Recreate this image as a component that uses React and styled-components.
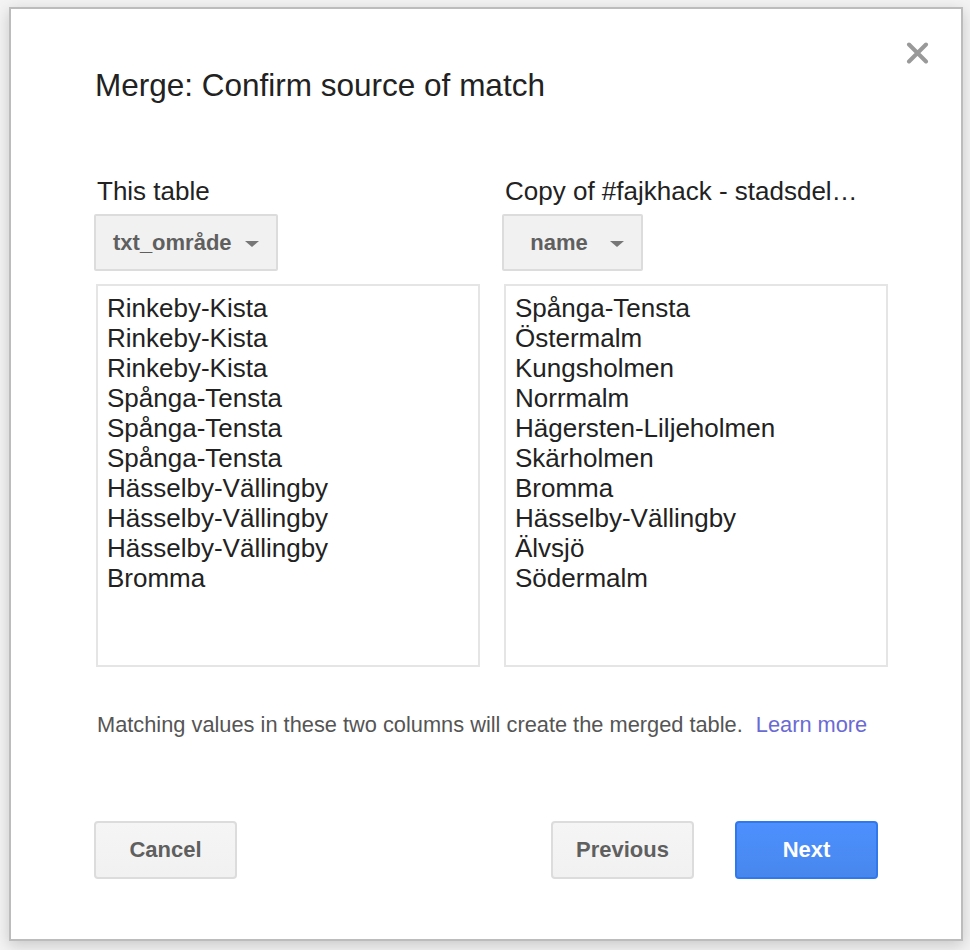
import React from 'react'
import styled, { createGlobalStyle } from 'styled-components'

const GlobalStyle = createGlobalStyle`
  html, body {
    margin: 0;
    padding: 0;
    background: #f3f3f3;
  }
  body {
    font-family: "Liberation Sans", Arial, sans-serif;
    color: #222;
  }
`

const Page = styled.div`
  width: 970px;
  height: 950px;
  padding: 7px 0 0 9px;
  box-sizing: border-box;
`

const Dialog = styled.div`
  position: relative;
  width: 954px;
  height: 934px;
  box-sizing: border-box;
  background: #fff;
  border: 2px solid #bcbcbc;
  box-shadow: 0 4px 14px rgba(0, 0, 0, 0.18);
  padding: 56px 72px 0 84px;
  display: flex;
  flex-direction: column;
`

const Close = styled.button`
  position: absolute;
  top: 31px;
  right: 31px;
  width: 26px;
  height: 26px;
  padding: 0;
  border: 0;
  background: none;
  cursor: pointer;
  display: flex;
  align-items: center;
  justify-content: center;
`

const Title = styled.h1`
  margin: 0;
  font-size: 31.5px;
  line-height: 40px;
  font-weight: 400;
  color: #222;
`

const Columns = styled.div`
  display: grid;
  grid-template-columns: 384px 384px;
  column-gap: 24px;
  margin-top: 71px;
`

const Column = styled.div`
  display: flex;
  flex-direction: column;
  align-items: flex-start;
`

const Label = styled.div`
  font-size: 26px;
  line-height: 30px;
  color: #222;
  padding-left: 2px;
  white-space: nowrap;
`

const Dropdown = styled.div`
  margin-top: 8px;
  margin-left: -1px;
  height: 57px;
  box-sizing: border-box;
  display: flex;
  align-items: center;
  gap: 13px;
  padding: 0 17px;
  background: #f1f1f1;
  border: 2px solid #dcdcdc;
  border-radius: 2px;
  font-size: 22px;
  font-weight: 700;
  color: #5f5f5f;
`

const DropLabel = styled.span`
  min-width: 76px;
  text-align: center;
`

const Caret = styled.span`
  width: 0;
  height: 0;
  border-left: 7px solid transparent;
  border-right: 7px solid transparent;
  border-top: 6px solid #777;
  margin-top: 2px;
`

const ValueList = styled.div`
  margin: 13px 0 0 1px;
  width: 384px;
  height: 383px;
  box-sizing: border-box;
  border: 2px solid #e5e5e5;
  padding: 7px 9px;
  font-size: 26px;
  line-height: 30px;
  color: #222;
`

const Hint = styled.p`
  margin: 43px 0 0 2px;
  font-size: 21.8px;
  line-height: 30px;
  color: #555;
`

const HintLink = styled.a`
  color: #6a6ad4;
  text-decoration: none;
  margin-left: 13px;
`

const Actions = styled.div`
  display: flex;
  align-items: center;
  margin: 81px 0 0 -1px;
  width: 784px;
`

const Button = styled.button`
  width: 143px;
  height: 58px;
  box-sizing: border-box;
  border-radius: 4px;
  font-family: inherit;
  font-size: 22px;
  font-weight: 700;
  cursor: pointer;
  border: 2px solid ${p => (p.$primary ? '#3079ed' : '#dcdcdc')};
  background: ${p => (p.$primary ? 'linear-gradient(#4d90fe, #4787ed)' : 'linear-gradient(#f5f5f5, #f1f1f1)')};
  color: ${p => (p.$primary ? '#fff' : '#5f5f5f')};
  margin-left: ${p => p.$gap || 0}px;
`

const Spacer = styled.div`
  flex: 1;
`

const left = [
  'Rinkeby-Kista',
  'Rinkeby-Kista',
  'Rinkeby-Kista',
  'Spånga-Tensta',
  'Spånga-Tensta',
  'Spånga-Tensta',
  'Hässelby-Vällingby',
  'Hässelby-Vällingby',
  'Hässelby-Vällingby',
  'Bromma',
]

const right = [
  'Spånga-Tensta',
  'Östermalm',
  'Kungsholmen',
  'Norrmalm',
  'Hägersten-Liljeholmen',
  'Skärholmen',
  'Bromma',
  'Hässelby-Vällingby',
  'Älvsjö',
  'Södermalm',
]

const App = () => (
  <Page>
    <GlobalStyle />
    <Dialog>
      <Close aria-label="Close">
        <svg width="23" height="22" viewBox="0 0 23 22">
          <path d="M3 2.5 L20 19.5 M20 2.5 L3 19.5" stroke="#999" strokeWidth="4" strokeLinecap="round" />
        </svg>
      </Close>
      <Title>Merge: Confirm source of match</Title>
      <Columns>
        <Column>
          <Label>This table</Label>
          <Dropdown>
            <DropLabel>txt_område</DropLabel>
            <Caret />
          </Dropdown>
          <ValueList>
            {left.map((v, i) => <div key={i}>{v}</div>)}
          </ValueList>
        </Column>
        <Column>
          <Label>Copy of #fajkhack - stadsdel…</Label>
          <Dropdown>
            <DropLabel>name</DropLabel>
            <Caret />
          </Dropdown>
          <ValueList>
            {right.map((v, i) => <div key={i}>{v}</div>)}
          </ValueList>
        </Column>
      </Columns>
      <Hint>
        Matching values in these two columns will create the merged table.
        <HintLink href="#">Learn more</HintLink>
      </Hint>
      <Actions>
        <Button>Cancel</Button>
        <Spacer />
        <Button>Previous</Button>
        <Button $primary $gap={41}>Next</Button>
      </Actions>
    </Dialog>
  </Page>
)

export default App
